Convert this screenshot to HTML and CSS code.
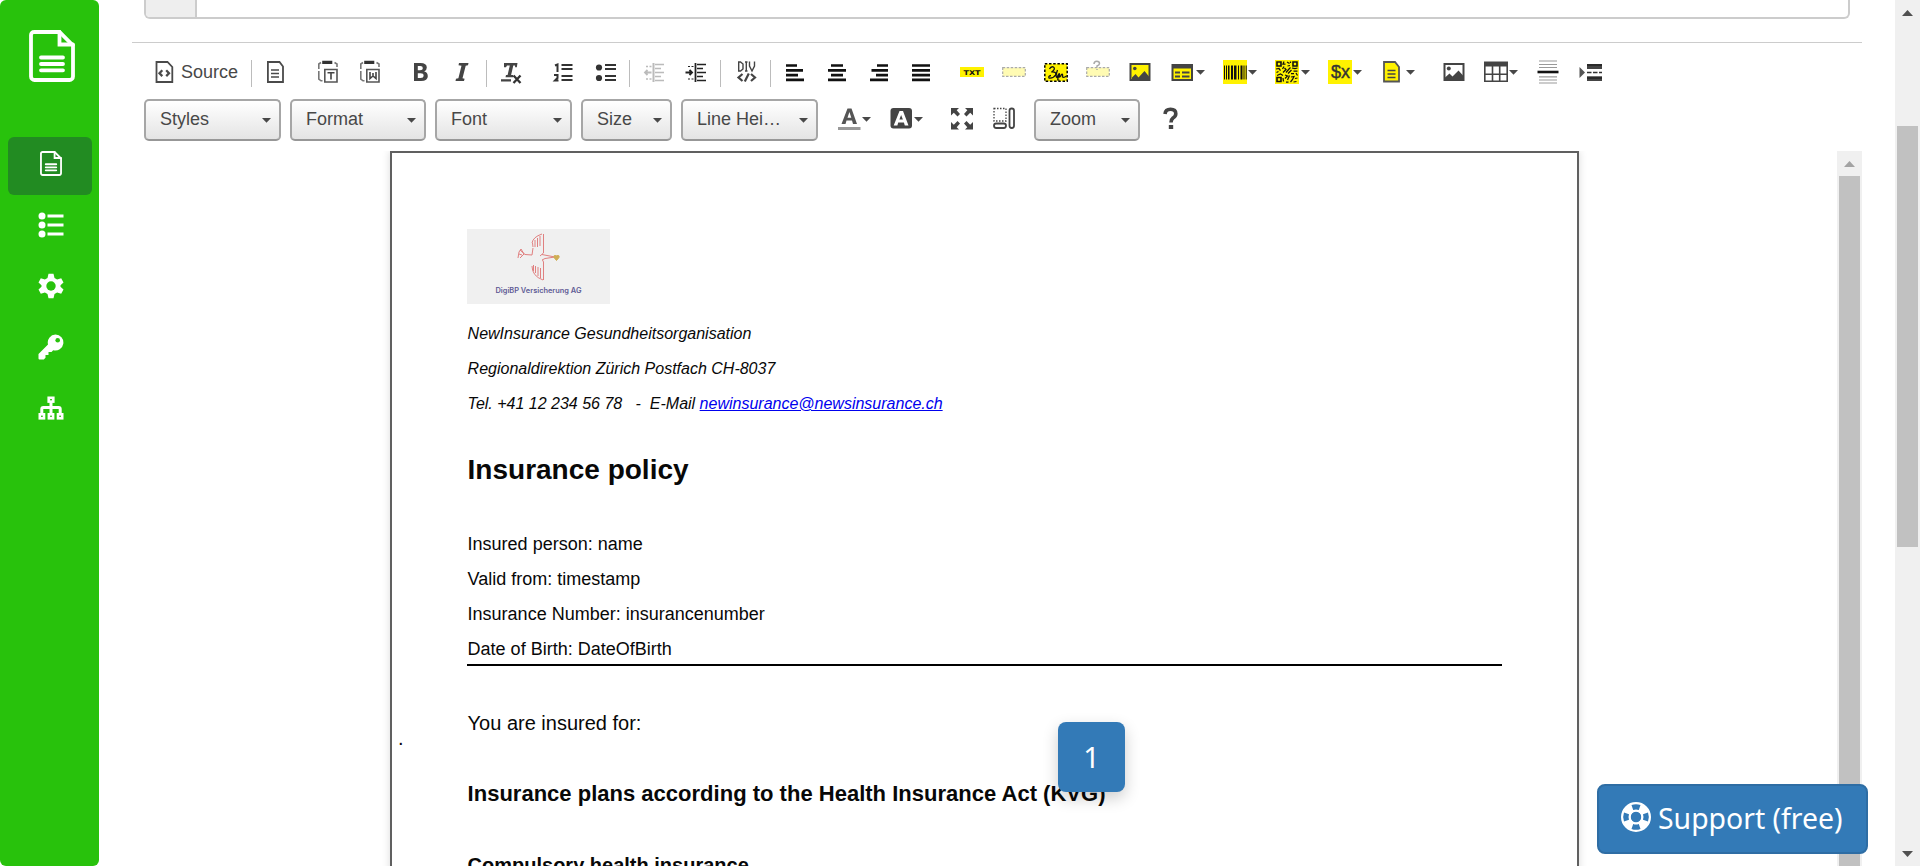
FILE: index.html
```html
<!DOCTYPE html>
<html lang="en">
<head>
<meta charset="utf-8">
<title>Template editor</title>
<link rel="stylesheet" href="styles.css">
</head>
<body>
<svg class="defs" width="0" height="0">
  <defs>
    <symbol id="doc" viewBox="0 0 46 52"><path d="M4.500 2H30.500L44 15.500V46.500a3.500 3.500 0 0 1-3.500 3.500H5.500a3.500 3.500 0 0 1-3.500-3.500V5a3 3 0 0 1 3-3Z" fill="none" stroke="currentColor" stroke-width="3.800"/><path d="M30.500 2V14.500H44M12 27.500H34M12 34H34M12 40.300H34" fill="none" stroke="currentColor" stroke-width="3.800" stroke-linecap="round"/></symbol>
    <symbol id="caret" viewBox="0 0 9 5"><path d="M0 0H9L4.500 4.700Z" fill="currentColor"/></symbol>
  </defs>
</svg>
<nav class="sidebar">
  <a class="brand"><svg width="46" height="52"><use href="#doc"/></svg></a>
  <a class="nav-item active"><svg width="22" height="25"><use href="#doc"/></svg></a>
  <a class="nav-item"><svg width="26" height="26" viewBox="0 0 26 26" fill="currentColor"><circle cx="4" cy="4" r="3.500"/><circle cx="4" cy="13" r="3.500"/><circle cx="4" cy="22" r="3.500"/><path d="M9.500 2.400H25.500V5.600H9.500ZM9.500 11.400H25.500V14.600H9.500ZM9.500 20.400H25.500V23.600H9.500Z"/></svg></a>
  <a class="nav-item"><svg width="26" height="26" viewBox="0 0 26 26"><g fill="currentColor"><path d="M10.500.8h5l1 4.200 2.600 1.500 4.100-1.300 2.300 4.300-3 2.700v1.600l3 2.700-2.300 4.300-4.100-1.300-2.600 1.500-1 4.200h-5l-1-4.200-2.600-1.500-4.100 1.300L.500 16.500l3-2.700v-1.600l-3-2.700 2.300-4.300 4.100 1.300L9.500 5Z"/></g><circle class="gear-hole" cx="13" cy="13" r="4.700"/></svg></a>
  <a class="nav-item"><svg width="26" height="26" viewBox="0 0 26 26"><path d="M17.500.500a8 8 0 1 1-2.300 15.700l-1.700 1.800h-3v3h-3v2.700L5.800 25.500H1.500a1 1 0 0 1-1-1V20L10 10.500A8 8 0 0 1 17.500.500Z" fill="currentColor"/><circle class="key-hole" cx="19.700" cy="6.200" r="2.300"/></svg></a>
  <a class="nav-item"><svg width="26" height="24" viewBox="0 0 26 24" fill="none" stroke="currentColor" stroke-width="2.600"><rect x="10.700" y="1.800" width="4.600" height="3.800"/><rect x="1.800" y="18.300" width="4.200" height="4"/><rect x="10.900" y="18.300" width="4.200" height="4"/><rect x="20" y="18.300" width="4.200" height="4"/><path d="M13 6V17.500M3.800 17.500V13q0-1.500 1.500-1.500H20.700q1.500 0 1.500 1.500V17.500" stroke-width="3"/></svg></a>
</nav>

<main class="content">
  <div class="field"><span class="addon"></span></div>
  <div class="editor">
    <div class="toolbar row-one">
      <a class="tool source"><svg width="24" height="24" viewBox="0 0 24 24" fill="none" stroke="#4a4a4a" stroke-width="1.800"><path d="M4.500 2H15.500L20.300 7V22H4.500Z"/><path d="M10.300 10.300 7.500 13.200 10.300 16.100M14.200 10.300 17 13.200 14.200 16.100" stroke-width="2.300"/></svg><span>Source</span></a>
      <i class="sep"></i>
      <svg width="24" height="24" viewBox="0 0 24 24" fill="none" stroke="#4a4a4a" stroke-width="1.800"><path d="M4.900 2H16.500L20 6.500V22H4.900Z"/><path d="M8 10H16M8 13.500H16M8 17H16" stroke-width="1.500"/></svg>
      <svg width="24" height="24" viewBox="0 0 24 24" fill="none" stroke="#777" stroke-width="1.600"><path d="M5 2.500 2.800 4V9M2.800 11V19L5 20.800H6.500M18.500 2.500 21 4V7"/><path d="M7 1.500h8.500v1.800H7Z" stroke="#333" fill="#333"/><path d="M8.800 9.500H21V22H8.800Z" stroke="#555"/><path d="M11.500 12.700H18.500M15 12.700V19.500" stroke="#444"/></svg>
      <svg width="24" height="24" viewBox="0 0 24 24" fill="none" stroke="#777" stroke-width="1.600"><path d="M5 2.500 2.800 4V9M2.800 11V19L5 20.800H6.500M18.500 2.500 21 4V7"/><path d="M7 1.500h8.500v1.800H7Z" stroke="#333" fill="#333"/><path d="M8.800 9.500H21V22H8.800Z" stroke="#555"/><path d="M12 12V18.500L15 16 18 18.500V12M15 13V16" stroke="#444"/></svg>
      <svg width="24" height="24" viewBox="0 0 24 24"><path d="M5 3H11.500Q17.800 3 17.800 7.600 17.800 10.500 15.200 11.500 18.800 12.300 18.800 16.200 18.800 21 12 21H5ZM8.800 6V10.200H11Q13.800 10.200 13.800 8 13.800 6 11.300 6ZM8.800 13.200V18H11.500Q14.600 18 14.600 15.500 14.600 13.200 11.500 13.200Z" fill="#444" fill-rule="evenodd"/></svg>
      <svg width="24" height="24" viewBox="0 0 24 24"><path d="M9 3H18.500L18 5.200 15.700 5.700 12.500 18.200 14.600 18.800 14 21H5.500L6 18.800 8.400 18.200 11.500 5.700 8.500 5.200Z" fill="#444"/></svg>
      <i class="sep"></i>
      <svg width="24" height="24" viewBox="0 0 24 24"><path d="M4 3H17.500L16.800 7.300H15.200L15 5.600H13.300L11.100 15H13V17.300H5.500L6 15H7.600L9.800 5.600H7L6 7.300H4ZM1 19.300H11V21.500H1Z" fill="#444"/><path d="M13.500 15.500 20.500 23M20.500 15.500 13.500 23" stroke="#333" stroke-width="2.300"/></svg>
      <svg width="24" height="24" viewBox="0 0 24 24" fill="none" stroke="#333" stroke-width="2"><path d="M4 5.500 6.500 4.500V12M3 15H6.500V18L4 20.500H7.500" /><path d="M10.500 5H21.500M10.500 9H21.500M10.500 16H21.500M10.500 20H21.500" stroke-width="1.900"/></svg>
      <svg width="24" height="24" viewBox="0 0 24 24"><circle cx="5" cy="7.500" r="3.100" fill="#333"/><circle cx="5" cy="18" r="3.100" fill="#333"/><path d="M11 5H22M11 9H22M11 16H22M11 20H22" stroke="#333" stroke-width="1.900"/></svg>
      <i class="sep"></i>
      <svg class="faded" width="24" height="24" viewBox="0 0 24 24" fill="none" stroke="#222" stroke-width="2"><path d="M11.500 3V22"/><path d="M13 4.500H22M13 8.500H19M13 12.500H22M13 16.500H19M13 20.500H22" stroke-width="1.500"/><path d="M2.500 12.500H9.500M5.500 10 3 12.500 5.500 15" stroke-width="1.800"/><path d="M4 6.500H9.500M4 19H9.500" stroke-width="1.300" stroke-dasharray="2 1.500"/></svg>
      <svg width="24" height="24" viewBox="0 0 24 24" fill="none" stroke="#222" stroke-width="1.800"><path d="M11.500 3V22"/><path d="M13 4.500H22M13 8.500H19M13 12.500H22M13 16.500H19M13 20.500H22" stroke-width="1.500"/><path d="M1.500 12.500H8M5.500 10 8 12.500 5.500 15" stroke-width="1.900"/><path d="M4 6.500H9.500M4 19H9.500" stroke-width="1.200" stroke-dasharray="2 1.500"/></svg>
      <i class="sep"></i>
      <svg width="24" height="24" viewBox="0 0 24 24" fill="none" stroke="#444" stroke-width="1.400"><path d="M3.700 2V11H5.500L8 9V4L5.500 2ZM10 2H12.500M11.300 2V11M10 11H12.500M14.500 1.500V6L17 11 19.500 6V1.500"/><path d="M7.500 14 3.500 17.500 7.500 21M16 14 20 17.500 16 21M13.800 13.500 9.800 21.500" stroke-width="2.200"/></svg>
      <i class="sep"></i>
      <svg width="24" height="24" viewBox="0 0 24 24" stroke="#111" stroke-width="2.700"><path d="M3 5.500H14M3 10.300H20M3 15.100H15M3 19.800H21"/></svg>
      <svg width="24" height="24" viewBox="0 0 24 24" stroke="#111" stroke-width="2.700"><path d="M6 5.500H18M3 10.300H21M6 15.100H18M3 19.800H21"/></svg>
      <svg width="24" height="24" viewBox="0 0 24 24" stroke="#111" stroke-width="2.700"><path d="M10 5.500H21M4.500 10.300H21M9 15.100H21M3 19.800H21"/></svg>
      <svg width="24" height="24" viewBox="0 0 24 24" stroke="#111" stroke-width="2.700"><path d="M3 5.500H21M3 10.300H21M3 15.100H21M3 19.800H21"/></svg>
      <svg width="24" height="24" viewBox="0 0 24 24"><path d="M0 7H24V17H0Z" fill="#fff200"/><text class="txt-label" x="12" y="14.500" text-anchor="middle" textLength="17" lengthAdjust="spacingAndGlyphs">TXT</text></svg>
      <svg width="24" height="24" viewBox="0 0 24 24"><path d="M.700 7.700H23.300V16.300H.700Z" fill="#fffbb3" stroke="#aaa" stroke-width="1.200" stroke-dasharray="2.500 1.500"/></svg>
      <svg width="24" height="24" viewBox="0 0 24 24" fill="none"><path d="M.800 3.800H23.200V21.200H.800Z" fill="#fff200" stroke="#000" stroke-width="1.500" stroke-dasharray="2.500 1.700"/><path d="M5.500 9Q7 6 9.500 7 12 9 7.500 12 13 11.500 11.500 15 9.500 18.500 5 18 4 16 7 15.500M13.500 10Q11 17 13 17.500 15.500 12 15.500 14.500 15 19.500 17.500 14.500 19 13 18.500 17 20 18 22.500 16M15.500 15Q12 21 15.500 20" stroke="#111" stroke-width="1.300"/></svg>
      <svg width="24" height="24" viewBox="0 0 24 24" fill="none"><path d="M.700 7.700H23.300V16.300H.700Z" fill="#fffbb3" stroke="#aaa" stroke-width="1.200" stroke-dasharray="2.500 1.500"/><path d="M8 4Q8 1.200 10.800 1.200 13.500 1.200 13.500 3.500 13.500 5 11 6V7.500M11 9V10" stroke="#aaa" stroke-width="1.500"/></svg>
      <svg width="24" height="24" viewBox="0 0 24 24"><path d="M2.500 4H21.500V20H2.500Z" fill="#fff200" stroke="#444" stroke-width="2"/><circle cx="6.800" cy="8.500" r="1.800" fill="#444"/><path d="M4 20V17.500L7.500 14 10.500 17.500 16.500 11 21 16.500V20Z" fill="#444"/></svg>
      <a class="tool"><svg width="24" height="24" viewBox="0 0 24 24"><path d="M2.500 5H22V20H2.500Z" fill="#fff200" stroke="#444" stroke-width="2"/><path d="M2.500 5H22V8.500H2.500Z" fill="#444"/><path d="M5 12.500H10M5 16.500H10M12 12.500H19.500M12 16.500H19.500" stroke="#444" stroke-width="2.200"/></svg><svg class="caret" width="9" height="5"><use href="#caret"/></svg></a>
      <a class="tool"><svg width="24" height="24" viewBox="0 0 24 24"><path d="M0 0H24V24H0Z" fill="#fff200"/><path d="M1 5.500h1v14H1ZM3 5.500h1v14H3ZM5 5.500h1.500v14H5ZM8 5.500h2v14H8ZM11 5.500h2.500v14H11ZM15 5.500h1v14h-1ZM17.500 5.500h2v14h-2ZM20.500 5.500h1v14h-1ZM22.700 5.500h1v14h-1Z" fill="#111"/></svg><svg class="caret caret-tight" width="9" height="5"><use href="#caret"/></svg></a>
      <a class="tool"><svg width="24" height="24" viewBox="0 0 24 24" fill="none" stroke="#111" stroke-width="1.250"><path d="M0 0H24V24H0Z" fill="#fff200" stroke="none"/><path d="M2 2H6V6H2ZM18 2H22V6H18ZM2 17.500H6V21.500H2Z" stroke-width="1.600"/><path d="M9 1.500 8 4H10.500M12 2 14.500 3.500M15.500 1.500V3M12.500 6 15 5.500M9 6.500 7.500 9M1 9 4 8.500 5.500 10.500M1.500 12.500 3.500 11.500M2 15.500 5.500 14 8 15.500M8 12.500 11 9.500 9.500 8M11 12.500 14 9 15.500 7.500M13 13.500 16.500 10M17 8 20 8.500 22.500 8M18.500 11 22.500 11M16 13.500 19 13.500M21 13 22.500 15.500M10 15 12.500 16 10 18.500M14.500 15.500 12.500 20M8 18 8.500 21.500M11 22H13.500M16 17 19 16.500 17.500 19.500 15.500 22M20 18.500 22.500 18M18.500 22 21.500 21.500"/></svg><svg class="caret" width="9" height="5"><use href="#caret"/></svg></a>
      <a class="tool"><svg width="24" height="24" viewBox="0 0 24 24"><path d="M0 0H24V24H0Z" fill="#fff200"/><text class="var-label" x="12.500" y="17.500" text-anchor="middle">$x</text></svg><svg class="caret caret-tight" width="9" height="5"><use href="#caret"/></svg></a>
      <a class="tool"><svg width="24" height="24" viewBox="0 0 24 24"><path d="M4 2H15L19 7V21.500H4Z" fill="#fff200" stroke="#555" stroke-width="1.800"/><path d="M7.500 10.500H15.500M7.500 14H15.500M7.500 17.500H15.500" stroke="#444" stroke-width="1.300"/></svg><svg class="caret" width="9" height="5"><use href="#caret"/></svg></a>
      <svg width="24" height="24" viewBox="0 0 24 24"><path d="M2.500 4H21.500V20H2.500Z" fill="#fff" stroke="#444" stroke-width="2"/><circle cx="6.800" cy="8.500" r="2" fill="#444"/><path d="M3 20V17.500L7.500 13.500 10.500 16.500 16.500 10.500 21 15.500V20Z" fill="#444"/></svg>
      <a class="tool"><svg width="24" height="24" viewBox="0 0 24 24"><path d="M.800 2.800H23.200V21.200H.800ZM.800 14.300H23.200M8.500 6V21M15.700 6V21" fill="none" stroke="#444" stroke-width="1.600"/><path d="M0 1.500H24V6.500H0Z" fill="#444"/></svg><svg class="caret caret-tight" width="9" height="5"><use href="#caret"/></svg></a>
      <svg width="24" height="24" viewBox="0 0 24 24"><path d="M3 1H21M3 4.500H21M3 7.500H21M3 16.800H21M3 20H21M3 23H21" stroke="#999" stroke-width="1.200"/><path d="M1.500 12H22.500" stroke="#111" stroke-width="2.600"/></svg>
      <svg width="24" height="24" viewBox="0 0 24 24"><path d="M1.500 7V18L7 12.500Z" fill="#555"/><path d="M9 4H24V9H9ZM9 16.200H24V21H9Z" fill="#444"/><path d="M9 5H24M9 18H24" stroke="#111"/><path d="M9 12.500H24" stroke="#333" stroke-width="1.600" stroke-dasharray="4.500 1.500"/></svg>
    </div>
    <div class="toolbar row-two">
      <a class="combo"><span>Styles</span><svg width="9" height="5"><use href="#caret"/></svg></a>
      <a class="combo"><span>Format</span><svg width="9" height="5"><use href="#caret"/></svg></a>
      <a class="combo"><span>Font</span><svg width="9" height="5"><use href="#caret"/></svg></a>
      <a class="combo"><span>Size</span><svg width="9" height="5"><use href="#caret"/></svg></a>
      <a class="combo"><span>Line Hei…</span><svg width="9" height="5"><use href="#caret"/></svg></a>
      <a class="tool"><svg width="24" height="24" viewBox="0 0 24 24"><path d="M10.500 1.500H14.500L20 17H16L15 13.500H9.500L8.500 17H4.500ZM12.400 5 10.500 10.800H14.300Z" fill="#555" fill-rule="evenodd"/><path d="M1 20H23.500V23H1Z" fill="#999"/></svg><svg class="caret caret-tight" width="9" height="5"><use href="#caret"/></svg></a>
      <a class="tool"><svg width="24" height="24" viewBox="0 0 24 24"><rect x="1.500" y="1" width="21.500" height="20.500" rx="3" fill="#444"/><path d="M10.500 4H14L19.500 18.500H15.800L14.900 15.500H9.200L8.400 18.500H4.700ZM12.100 8 10.400 12.500H13.900Z" fill="#fff" fill-rule="evenodd"/></svg><svg class="caret caret-tight" width="9" height="5"><use href="#caret"/></svg></a>
      <svg width="24" height="24" viewBox="0 0 24 24" fill="#444"><path d="M1 1H9L6.700 3.300 10 7 7.500 9.500 3.800 5.800 1 8.500ZM23 1H15L17.300 3.300 14 7 16.500 9.500 20.200 5.800 23 8.500ZM1 22.500H9L6.700 20.200 10 16.500 7.500 14 3.800 17.700 1 15ZM23 22.500H15L17.300 20.200 14 16.500 16.500 14 20.200 17.700 23 15Z"/></svg>
      <svg width="24" height="24" viewBox="0 0 24 24" fill="none" stroke="#444" stroke-width="1.800"><path d="M2 1.500H14V14H2Z" stroke-width="1.300" stroke-dasharray="1.500 1.500"/><rect x="17.500" y="1.500" width="4.500" height="19.500" rx="2.200"/><rect x="2" y="16.500" width="12" height="4.500" rx="2.200"/></svg>
      <a class="combo"><span>Zoom</span><svg width="9" height="5"><use href="#caret"/></svg></a>
      <svg width="24" height="24" viewBox="0 0 24 24"><path d="M6 7Q6.500 2.300 11.500 2.300 16.800 2.300 16.800 6.800 16.800 9.300 14 11 12 12.500 12 15.500" fill="none" stroke="#444" stroke-width="3.600"/><path d="M9.800 18H14.200V22H9.800Z" fill="#444"/></svg>
    </div>
    <div class="canvas">
      <article class="sheet">
        <span class="stray">.</span>
        <svg class="logo" width="143" height="75" viewBox="0 0 143 75">
          <g fill="none" stroke="#e08080" stroke-width="1">
            <path d="M76.500 5V24L73 27M75 5Q66 8 65 14M73 7V17M70.500 9V18M68 11V18M65.500 14L66 18M76.500 51V33L75.500 31M76 51Q65 47 65 37M73.500 39V49M71 38V47M68.500 37V44M66.500 36V42" />
            <path d="M66 19 65 26 58 25.500 53 21M51 29 52 23 54 20 57 25 53 29M52 25 55 26M75 25.500 80 26.500 88 28 78 29.500 75 31"/>
          </g>
          <path d="M89.500 31.500 87 28.500Q86.200 25.600 89.500 26.800 92.800 25.600 92 28.500Z" fill="#cfae55" stroke="#cfae55"/>
          <text class="logo-label" x="71.500" y="64" text-anchor="middle" textLength="86" lengthAdjust="spacingAndGlyphs">DigiBP Versicherung AG</text>
        </svg>
        <div class="address">
          <p>NewInsurance Gesundheitsorganisation</p>
          <p>Regionaldirektion Zürich Postfach CH-8037</p>
          <p>Tel. +41 12 234 56 78 &nbsp; - &nbsp;E-Mail <a href="#">newinsurance@newsinsurance.ch</a></p>
        </div>
        <h1>Insurance policy</h1>
        <div class="facts">
          <p>Insured person: name</p>
          <p>Valid from: timestamp</p>
          <p>Insurance Number: insurancenumber</p>
          <p>Date of Birth: DateOfBirth</p>
        </div>
        <p class="intro">You are insured for:</p>
        <h2>Insurance plans according to the Health Insurance Act (KVG)</h2>
        <h3>Compulsory health insurance</h3>
      </article>
      <div class="scroll inner"><i class="arrow up"></i><i class="thumb"></i></div>
    </div>
  </div>
</main>
<div class="scroll outer"><i class="arrow up"></i><i class="thumb"></i><i class="arrow down"></i></div>
<div class="step">1</div>
<button class="support"><svg width="30" height="30" viewBox="0 0 30 30"><circle cx="15" cy="15" r="10" fill="none" stroke="#fff" stroke-width="10"/><g fill="#337ab7"><path d="M10.500 3Q15 1.300 19.500 3L17.800 8Q15 7 12.200 8ZM10.500 27Q15 28.700 19.500 27L17.800 22Q15 23 12.200 22ZM3 10.500Q1.300 15 3 19.500L8 17.800Q7 15 8 12.200ZM27 10.500Q28.700 15 27 19.500L22 17.800Q23 15 22 12.200Z"/></g><circle cx="15" cy="15" r="5.200" fill="#337ab7"/></svg><span>Support (free)</span></button>
</body>
</html>
```

FILE: styles.css
```css
* { box-sizing: border-box; }
body {
  margin: 0;
  height: 866px;
  display: flex;
  overflow: hidden;
  background: #fff;
  font-family: "Liberation Sans", Arial, sans-serif;
}
svg { display: block; flex: none; }
.defs { position: absolute; }

.sidebar {
  flex: none;
  width: 99px;
  height: 866px;
  padding: 30px 7px 0 8px;
  border-radius: 6px;
  background: #28c20c;
  color: #fff;
}
.brand { display: flex; justify-content: center; height: 107px; padding-left: 4px; }
.nav-item {
  display: flex;
  align-items: center;
  justify-content: center;
  height: 58px;
  margin-bottom: 3px;
  padding: 0 0 5px 2px;
  border-radius: 6px;
}
.nav-item.active { background: #228b22; }
.gear-hole, .key-hole { fill: #28c20c; }

.content { flex: 1; min-width: 0; padding: 0 33px; display: flex; flex-direction: column; }
.field {
  flex: none;
  height: 19px;
  margin: 0 12px;
  display: flex;
  border: 2px solid #ccc;
  border-top: 0;
  border-radius: 0 0 6px 6px;
}
.addon { width: 51px; background: #eee; border-right: 2px solid #ccc; border-bottom-left-radius: 4px; }
.editor { margin-top: 23px; border-top: 1px solid #ccc; flex: 1; display: flex; flex-direction: column; min-height: 0; }

.toolbar { flex: none; display: grid; justify-items: start; color: #484848; font-size: 18px; }
.row-one {
  height: 56px;
  padding: 17px 0 0 20px;
  grid-template-columns: 99px 12px 53px 42px 51px 41px 36px 14px 51px 43px 35px 13px 42px 36px 15px 35px 13px 42px 42px 42px 51px 42px 42px 42px 42px 42px 53px 52px 53px 52px 62px 42px 52px 42px 24px;
}
.row-two {
  height: 52px;
  padding-left: 12px;
  grid-template-columns: 146px 145px 146px 100px 155px 52px 62px 42px 42px 125px 24px;
}
.row-two > svg, .row-two > .tool { margin-top: 8px; }
.tool { display: flex; align-items: flex-start; }
.row-two > .tool { margin-left: 1px; }
.source span { margin: -1px 0 0 5px; line-height: 26px; height: 26px; }
.caret { margin: 10px 0 0 2px; }
.caret-tight { margin-left: 1px; }
.sep { width: 1px; height: 27px; background: #bcbcbc; }
.faded { opacity: .3; }
.txt-label { font: bold 6.500px "DejaVu Sans", sans-serif; fill: #111; }
.var-label { font: 18px "Liberation Sans", sans-serif; fill: #333; stroke: #333; stroke-width: .4px; }
.combo {
  display: flex;
  align-items: center;
  justify-content: space-between;
  width: calc(100% - 9px);
  height: 42px;
  padding: 0 8px 0 14px;
  border: 2px solid #a6a6a6;
  border-bottom-color: #979797;
  border-radius: 5px;
  background: linear-gradient(#fff, #e4e4e4);
}
.combo span { padding-bottom: 2px; }
.combo:nth-child(5) { width: 137px; }
.combo:nth-child(10) { width: 106px; }

.canvas { flex: 1; min-height: 0; display: flex; justify-content: space-between; padding-left: 258px; overflow: hidden; }
.sheet {
  position: relative;
  width: 1189px;
  height: 1000px;
  padding: 76px 75px 0;
  border: 2px solid #606060;
  box-shadow: 0 0 8px rgba(0, 0, 0, .15);
  color: #080808;
}
.sheet p, .sheet h1, .sheet h2, .sheet h3 { margin: 0; padding-left: .6px; line-height: 35px; }
.logo { background: #f0f0f0; }
.logo-label { font: 600 7px Inter, sans-serif; fill: #5f5b95; }
.address { margin-top: 12px; font-size: 16px; font-style: italic; }
.address a { color: #00e; }
.sheet h1 { margin-top: 31px; font-size: 28px; }
.facts { margin-top: 39px; height: 140px; padding-top: 1px; border-bottom: 2px solid #000; font-size: 18px; }
.sheet .intro { padding-top: 40px; font-size: 20px; }
.sheet h2 { margin-top: 35px; font-size: 22px; letter-spacing: .01px; }
.sheet h3 { margin-top: 37px; font-size: 20px; }
.stray { position: absolute; left: 6px; top: 574px; font-size: 20px; }

.scroll { flex: none; width: 25px; padding: 0 2px; background: #f0f0f0; display: flex; flex-direction: column; align-items: center; }
.arrow { width: 11px; height: 6px; background: #505050; }
.up { clip-path: polygon(50% 0, 100% 100%, 0 100%); margin-top: 10px; }
.down { clip-path: polygon(0 0, 100% 0, 50% 100%); margin: auto 0 9px; }
.inner .up { background: #a3a3a3; }
.thumb { width: 21px; background: #c1c1c1; }
.inner .thumb { margin-top: 9px; flex: 1; }
.outer .thumb { margin-top: 110px; height: 421px; }

.step, .support { position: absolute; background: #337ab7; color: #fff; font-family: "Noto Sans", sans-serif; border-radius: 8px; }
.step { left: 1058px; top: 722px; width: 67px; height: 70px; line-height: 69px; text-align: center; font-size: 29px; box-shadow: 0 6px 16px rgba(0, 0, 0, .2); }
.support {
  left: 1597px;
  top: 784px;
  width: 271px;
  height: 70px;
  padding: 0 0 5px 22px;
  display: flex;
  align-items: center;
  gap: 7px;
  border: 2px solid #2e6da4;
  font-size: 28.400px;
  white-space: nowrap;
}
.support span { padding-top: 3px; }
```
